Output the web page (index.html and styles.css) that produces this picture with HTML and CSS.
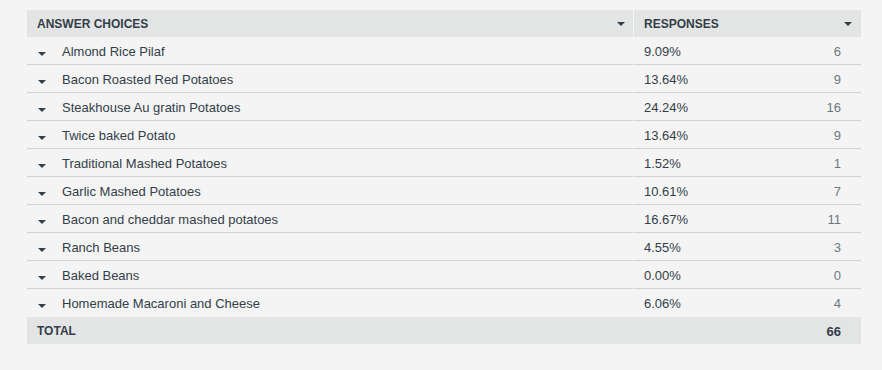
FILE: index.html
```html
<!DOCTYPE html>
<html lang="en">
<head>
<meta charset="utf-8">
<title>Answer choices</title>
<link rel="stylesheet" href="styles.css">
</head>
<body>
<div class="table">
  <div class="cell head"><span>Answer Choices</span><i class="caret"></i></div>
  <div class="cell head head-r"><span>Responses</span><i class="caret"></i></div>

  <div class="cell choice"><i class="caret row-caret"></i><span>Almond Rice Pilaf</span></div>
  <div class="cell resp"><span>9.09%</span><span class="count">6</span></div>

  <div class="cell choice"><i class="caret row-caret"></i><span>Bacon Roasted Red Potatoes</span></div>
  <div class="cell resp"><span>13.64%</span><span class="count">9</span></div>

  <div class="cell choice"><i class="caret row-caret"></i><span>Steakhouse Au gratin Potatoes</span></div>
  <div class="cell resp"><span>24.24%</span><span class="count">16</span></div>

  <div class="cell choice"><i class="caret row-caret"></i><span>Twice baked Potato</span></div>
  <div class="cell resp"><span>13.64%</span><span class="count">9</span></div>

  <div class="cell choice"><i class="caret row-caret"></i><span>Traditional Mashed Potatoes</span></div>
  <div class="cell resp"><span>1.52%</span><span class="count">1</span></div>

  <div class="cell choice"><i class="caret row-caret"></i><span>Garlic Mashed Potatoes</span></div>
  <div class="cell resp"><span>10.61%</span><span class="count">7</span></div>

  <div class="cell choice"><i class="caret row-caret"></i><span>Bacon and cheddar mashed potatoes</span></div>
  <div class="cell resp"><span>16.67%</span><span class="count">11</span></div>

  <div class="cell choice"><i class="caret row-caret"></i><span>Ranch Beans</span></div>
  <div class="cell resp"><span>4.55%</span><span class="count">3</span></div>

  <div class="cell choice"><i class="caret row-caret"></i><span>Baked Beans</span></div>
  <div class="cell resp"><span>0.00%</span><span class="count">0</span></div>

  <div class="cell choice last"><i class="caret row-caret"></i><span>Homemade Macaroni and Cheese</span></div>
  <div class="cell resp last"><span>6.06%</span><span class="count">4</span></div>

  <div class="cell total"><span>Total</span><span class="total-count">66</span></div>
</div>
</body>
</html>
```
FILE: styles.css
```css
html, body {
  background: #f4f4f4;
}
body {
  margin: 0;
  padding: 10px 0 0 27px;
  font-family: "Liberation Sans", Arial, sans-serif;
  color: #333e48;
}
.table {
  display: grid;
  grid-template-columns: 606px 227px;
  column-gap: 1px;
  width: 834px;
}
.cell {
  display: flex;
  align-items: center;
  box-sizing: border-box;
  height: 28px;
  font-size: 13px;
}
.head, .total {
  height: 27px;
  background: #e3e4e4;
  font-size: 12px;
  font-weight: bold;
  text-transform: uppercase;
  justify-content: space-between;
  padding: 0 8px 0 10px;
}
.head-r {
  padding-right: 9px;
}
.total {
  grid-column: 1 / -1;
  padding: 1px 20px 0 10px;
}
.caret {
  display: block;
  width: 0;
  height: 0;
  border-left: 4px solid transparent;
  border-right: 4px solid transparent;
  border-top: 4px solid #333e48;
}
.choice {
  padding: 2px 0 0 11px;
  border-bottom: 1px solid #d0d2d3;
}
.row-caret {
  margin-right: 16px;
  transform: translateY(2px);
}
.resp {
  justify-content: space-between;
  padding: 2px 20px 0 10px;
  border-bottom: 1px solid #d0d2d3;
}
.last {
  border-bottom-color: transparent;
}
.count {
  color: #6b787f;
}
.total-count {
  font-size: 13px;
}
```
